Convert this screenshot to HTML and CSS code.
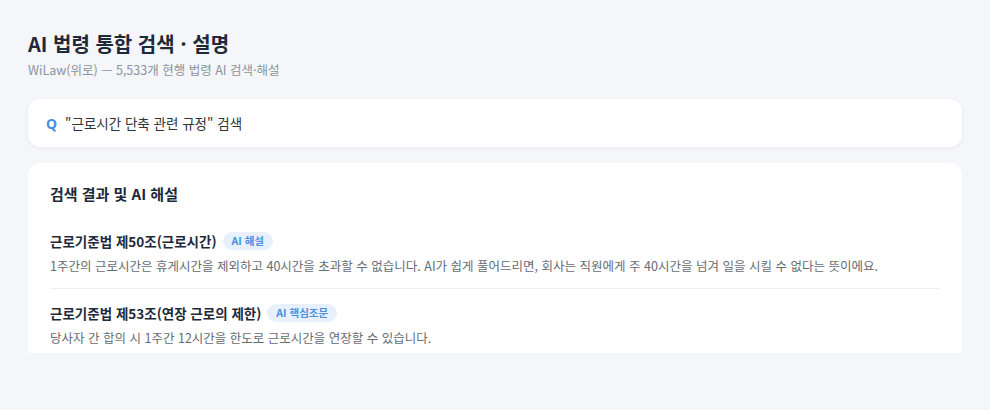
FILE: index.html
```html
<!DOCTYPE html>
<html lang="ko">
<head>
    <meta charset="UTF-8">
    <meta name="viewport" content="width=device-width, initial-scale=1.0">
    <title>AI 법령 통합 검색 · 설명</title>
    <link rel="stylesheet" href="styles.css">
</head>
<body>
    <header class="page-head">
        <h1>AI 법령 통합 검색 · 설명</h1>
        <div class="subtitle">WiLaw(위로) — 5,533개 현행 법령 AI 검색·해설</div>
    </header>

    <div class="search-box">
        <span class="search-icon">Q</span>
        <span class="search-query">"근로시간 단축 관련 규정" 검색</span>
    </div>

    <section class="result-card">
        <h2>검색 결과 및 AI 해설</h2>

        <div class="law-item">
            <div class="law-title">
                근로기준법 제50조(근로시간)
                <span class="badge">AI 해설</span>
            </div>
            <p class="law-desc">1주간의 근로시간은 휴게시간을 제외하고 40시간을 초과할 수 없습니다. AI가 쉽게 풀어드리면, 회사는 직원에게 주 40시간을 넘겨 일을 시킬 수 없다는 뜻이에요.</p>
        </div>

        <div class="law-item">
            <div class="law-title">
                근로기준법 제53조(연장 근로의 제한)
                <span class="badge">AI 핵심조문</span>
            </div>
            <p class="law-desc">당사자 간 합의 시 1주간 12시간을 한도로 근로시간을 연장할 수 있습니다.</p>
        </div>
    </section>
</body>
</html>
```

FILE: styles.css
```css
body {
    font-family: 'Noto Sans CJK KR', 'Noto Sans', sans-serif;
    background-color: #f5f6fa;
    color: #333;
    margin: 0;
    padding: 28px 28px 0;
    height: 410px;
    box-sizing: border-box;
    overflow: hidden;
}
.page-head {
    margin-bottom: 20px;
}
h1 {
    margin: 0;
    font-size: 20px;
    line-height: 32px;
    font-weight: 700;
    color: #1e2a3a;
}
.subtitle {
    margin-top: 1px;
    font-size: 12.5px;
    line-height: 18px;
    color: #8b939c;
}
.search-box {
    display: flex;
    align-items: center;
    height: 48px;
    padding: 0 18px;
    background-color: #fff;
    border-radius: 12px;
    box-shadow: 0 1px 4px rgba(30, 42, 58, 0.06);
    margin-bottom: 16px;
}
.search-icon {
    font-family: 'Noto Sans', sans-serif;
    font-weight: 700;
    font-size: 14px;
    color: #4a8fe0;
    margin-right: 8px;
}
.search-query {
    font-size: 13.5px;
    color: #333;
}
.result-card {
    background-color: #fff;
    border-radius: 12px 12px 0 0;
    padding: 20px 22px 0;
    height: 190px;
    box-sizing: border-box;
    overflow: hidden;
}
h2 {
    margin: 0 0 26px;
    font-size: 15px;
    line-height: 22px;
    font-weight: 700;
    color: #1e2a3a;
}
.law-item {
    padding-bottom: 12px;
    margin-bottom: 14px;
    border-bottom: 1px solid #eef0f3;
}
.law-item:last-child {
    border-bottom: none;
}
.law-title {
    display: flex;
    align-items: center;
    gap: 6px;
    font-size: 13.5px;
    line-height: 20px;
    font-weight: 700;
    color: #1e2a3a;
}
.badge {
    display: inline-block;
    padding: 0 9px;
    line-height: 18px;
    font-size: 10.5px;
    font-weight: 700;
    color: #4a8fe0;
    background-color: #e8f0fd;
    border-radius: 9px;
}
.law-desc {
    margin: 5px 0 0;
    font-size: 12.5px;
    line-height: 20px;
    color: #666c74;
}
```
